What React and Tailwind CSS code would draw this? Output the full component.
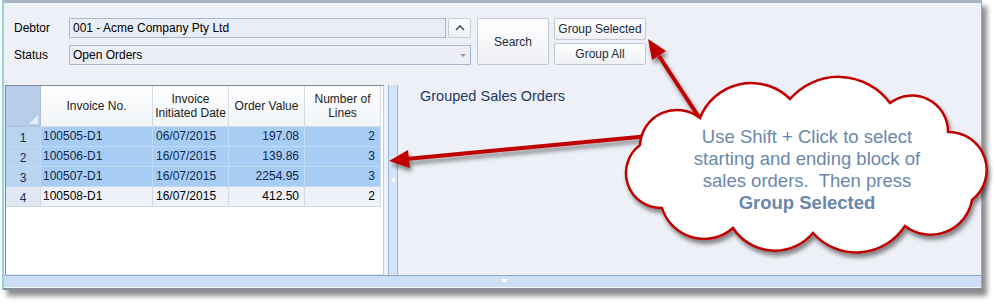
import React from "react";

const rows = [
  { n: 1, inv: "100505-D1", date: "06/07/2015", value: "197.08", lines: 2, sel: true },
  { n: 2, inv: "100506-D1", date: "16/07/2015", value: "139.86", lines: 3, sel: true },
  { n: 3, inv: "100507-D1", date: "16/07/2015", value: "2254.95", lines: 3, sel: true },
  { n: 4, inv: "100508-D1", date: "16/07/2015", value: "412.50", lines: 2, sel: false },
];

const btn =
  "flex items-center justify-center rounded-[2px] border border-[#c3c9d3] bg-gradient-to-b from-white to-[#eef0f4] text-[12px] text-[#1e2a3a]";

const GridRow = ({ r }) => {
  const cell = r.sel
    ? "bg-[#a7cdf4] border-r border-b border-[#c3daf2] text-[#10284f]"
    : "bg-[#eef1f7] border-r border-b border-[#d3d9e2] text-black";
  return (
    <div className="flex h-[20px] text-[12px] leading-[19px]">
      <div
        className={`w-[35px] text-center border-r border-b ${
          r.sel ? "bg-[#b9d4f1] border-[#c3daf2]" : "bg-[#dfe7f2] border-[#d0d8e4]"
        } text-[#1a2a50] pt-[2px]`}
      >
        {r.n}
      </div>
      <div className={`w-[112px] pl-[2px] ${cell}`}>{r.inv}</div>
      <div className={`w-[76px] pl-[3px] ${cell}`}>{r.date}</div>
      <div className={`w-[76px] pr-[5px] text-right ${cell}`}>{r.value}</div>
      <div className={`w-[76px] pr-[5px] text-right ${cell}`}>{r.lines}</div>
    </div>
  );
};

export default function App() {
  return (
    <div className="relative w-[996px] h-[306px] bg-white overflow-hidden font-['Liberation_Sans',Arial,sans-serif]">
      {/* window */}
      <div className="ml-[2px] w-[980px] h-[290px] flex flex-col bg-[#edf0f7] border-t-[3px] border-t-[#a8b3c3] border-l-[2px] border-l-[#8fd6dd] border-r border-r-[#9aa5b5] border-b-[2px] border-b-[#868d97] shadow-[5px_6px_5px_rgba(0,0,0,0.45)]">
        {/* form */}
        <div className="h-[82px] pt-[15px] pl-[10px] flex">
          <div className="flex flex-col gap-[7px]">
            <div className="flex items-center h-[20px]">
              <div className="w-[55px] text-[12px] text-black">Debtor</div>
              <div className="w-[377px] h-[20px] border border-[#a6b8d6] bg-[#e9edf5] pl-[3px] text-[12px] leading-[18px] text-black">
                001 - Acme Company Pty Ltd
              </div>
              <div className="ml-[2px] w-[23px] h-[20px] rounded-[2px] border border-[#c8cdd6] bg-gradient-to-b from-white to-[#eceff4] flex items-center justify-center">
                <svg width="10" height="6" viewBox="0 0 10 6">
                  <polyline points="1,5 5,1 9,5" fill="none" stroke="#4a4f58" strokeWidth="1.6" />
                </svg>
              </div>
            </div>
            <div className="flex items-center h-[20px]">
              <div className="w-[55px] text-[12px] text-black">Status</div>
              <div className="relative w-[402px] h-[20px] border border-[#a9b8cf] bg-[#ebeef5] pl-[3px] text-[12px] leading-[18px] text-black">
                Open Orders
                <svg className="absolute right-[4px] top-[8px]" width="6" height="3" viewBox="0 0 6 3">
                  <polygon points="0,0 6,0 3,3" fill="#b48ea5" />
                </svg>
              </div>
            </div>
          </div>
          <div className={`${btn} ml-[6px] w-[72px] h-[47px]`}>Search</div>
          <div className="ml-[5px] flex flex-col gap-[3px]">
            <div className={`${btn} w-[92px] h-[22px]`}>Group Selected</div>
            <div className={`${btn} w-[92px] h-[22px]`}>Group All</div>
          </div>
        </div>

        {/* main */}
        <div className="h-[190px] flex">
          <div className="ml-[1px] w-[379px] h-full border border-[#808993] border-r-[#c9ced6] border-b-[#e6e9ee] bg-white flex flex-col">
            <div className="flex h-[41px] text-[12px] leading-[14px] text-[#1b1b1b]">
              <div className="relative w-[35px] bg-[#b7cdea] border-r border-b border-[#a9bfdc]">
                <svg className="absolute right-[2px] bottom-[2px]" width="9" height="9" viewBox="0 0 9 9">
                  <polygon points="9,0 9,9 0,9" fill="#e6eef8" />
                </svg>
              </div>
              {[
                ["Invoice No.", 112],
                ["Invoice\nInitiated Date", 76],
                ["Order Value", 76],
                ["Number of\nLines", 76],
              ].map(([t, w]) => (
                <div
                  key={t}
                  style={{ width: w }}
                  className="flex items-center justify-center text-center whitespace-pre-line bg-gradient-to-b from-white to-[#f1f4f8] border-r border-b border-[#d6dce5]"
                >
                  {t}
                </div>
              ))}
            </div>
            {rows.map((r) => (
              <GridRow key={r.n} r={r} />
            ))}
          </div>

          {/* splitter */}
          <div className="ml-[4px] w-[10px] h-full border-x border-[#9fb6d6] bg-[#d5e3f6] flex items-center justify-center">
            <svg width="4" height="6" viewBox="0 0 4 6">
              <polygon points="4,0 4,6 0,3" fill="#ffffff" />
            </svg>
          </div>

          {/* right panel */}
          <div className="flex-1 pl-[22px] pt-[1px]">
            <div className="text-[14.5px] text-[#1f3864]">Grouped Sales Orders</div>
          </div>
        </div>

        {/* bottom strip */}
        <div className="h-[13px] border-t border-t-[#8fa6c4] border-b border-b-[#f4f6fa] bg-[#cddff4] flex justify-center">
          <svg className="mt-[3px] ml-[24px]" width="7" height="4" viewBox="0 0 7 4">
            <polygon points="0,0 7,0 3.5,4" fill="#ffffff" />
          </svg>
        </div>
      </div>

      {/* annotation: arrows and cloud */}
      <svg className="absolute left-0 top-0 pointer-events-none" width="996" height="306" viewBox="0 0 996 306">
        <defs>
          <filter id="sh" x="-20%" y="-20%" width="140%" height="140%">
            <feDropShadow dx="2" dy="4" stdDeviation="2.2" floodColor="#000" floodOpacity="0.45" />
          </filter>
        </defs>
        <g filter="url(#sh)">
          <line x1="706" y1="128" x2="659" y2="56" stroke="#c00000" strokeWidth="4" />
          <polygon points="648,39 666,51 652,60" fill="#c00000" />
          <line x1="660" y1="135" x2="406" y2="159" stroke="#c00000" strokeWidth="4" />
          <polygon points="389,161 408,150 410,168" fill="#c00000" />
        </g>
        <path
          filter="url(#sh)"
          d="M 700 118 A 55 55 0 0 1 790 99 A 64 64 0 0 1 890 103 A 36 36 0 0 1 948 132 A 38 38 0 0 1 972 200 A 42 42 0 0 1 905 226 A 58 58 0 0 1 813 233 A 50 50 0 0 1 733 228 A 44 44 0 0 1 662 208 A 35 35 0 0 1 640 145 A 37 37 0 0 1 700 118 Z"
          fill="#ffffff"
          stroke="#c00000"
          strokeWidth="2.5"
        />
      </svg>
      <div className="absolute left-[677px] top-[126px] w-[260px] text-center text-[18.5px] leading-[22px] text-[#6a87ab] whitespace-nowrap">
        Use Shift + Click to select
        <br />
        starting and ending block of
        <br />
        sales orders.&nbsp; Then press
        <br />
        <span className="font-bold">Group Selected</span>
      </div>
    </div>
  );
}
